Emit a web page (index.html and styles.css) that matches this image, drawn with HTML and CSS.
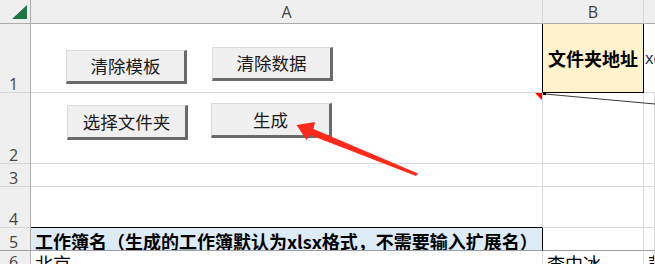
FILE: index.html
```html
<!DOCTYPE html>
<html lang="zh-CN">
<head>
    <meta charset="UTF-8">
    <title>工作簿生成</title>
    <link rel="stylesheet" href="styles.css">
</head>
<body>
    <div class="sheet">
        <!-- headers -->
        <div class="corner">
            <svg width="30" height="23" viewBox="0 0 30 23"><polygon points="12,19 27,19 27,5" fill="#217346"/></svg>
        </div>
        <div class="colhead">A</div>
        <div class="colhead">B</div>
        <div class="colhead last"></div>

        <!-- row 1 -->
        <div class="rowhead">1</div>
        <div class="cell a1"></div>
        <div class="cell b1">文件夹地址</div>
        <div class="cell c1">xc</div>

        <!-- row 2 -->
        <div class="rowhead">2</div>
        <div class="cell"></div>
        <div class="cell"></div>
        <div class="cell"></div>

        <!-- row 3 -->
        <div class="rowhead">3</div>
        <div class="cell"></div>
        <div class="cell"></div>
        <div class="cell"></div>

        <!-- row 4 -->
        <div class="rowhead">4</div>
        <div class="cell a4"></div>
        <div class="cell"></div>
        <div class="cell"></div>

        <!-- row 5 (frozen) -->
        <div class="rowhead frozen">5</div>
        <div class="cell frozen a5">工作簿名（生成的工作簿默认为xlsx格式，不需要输入扩展名）</div>
        <div class="cell frozen"></div>
        <div class="cell frozen"></div>

        <!-- row 6 -->
        <div class="rowhead top">6</div>
        <div class="cell top">北京</div>
        <div class="cell top">李中冰</div>
        <div class="cell top">彭</div>

        <!-- form buttons -->
        <button class="xl-btn btn-clear-tpl">清除模板</button>
        <button class="xl-btn btn-clear-data">清除数据</button>
        <button class="xl-btn btn-folder">选择文件夹</button>
        <button class="xl-btn btn-make">生成</button>

        <!-- comment marker, comment leader line and red arrow -->
        <svg class="overlay" width="655" height="264" viewBox="0 0 655 264">
            <polygon points="535,93 542,93 542,100" fill="#ff0000"/>
            <line x1="545" y1="94" x2="655" y2="104" stroke="#3a3a3a" stroke-width="1"/>
            <rect x="543" y="92" width="3" height="3" fill="#000"/>
            <polygon points="296.5,125 315,122 313.5,129 418,173.5 416,176 310,135 306.5,140" fill="#fd2a1c"/>
        </svg>
    </div>
</body>
</html>
```

FILE: styles.css
```css
html, body {
    margin: 0;
    padding: 0;
    background-color: #fff;
    overflow: hidden;
}
.sheet {
    position: relative;
    width: 655px;
    height: 264px;
    display: grid;
    grid-template-columns: 31px 512px 101px 1fr;
    grid-template-rows: 24px 69px 71px 23px 41px 23px 1fr;
    font-family: "Noto Sans CJK SC", "Noto Sans", sans-serif;
    overflow: hidden;
}
.corner {
    background-color: #efefef;
    border-right: 1px solid #ababab;
    border-bottom: 1px solid #ababab;
    box-sizing: border-box;
}
.corner svg {
    display: block;
}
.colhead {
    background-color: #efefef;
    border-right: 1px solid #d4d4d4;
    border-bottom: 1px solid #ababab;
    box-sizing: border-box;
    color: #444;
    font-family: "Open Sans", "Noto Sans", sans-serif;
    font-size: 16px;
    line-height: 1;
    display: flex;
    align-items: center;
    justify-content: center;
    padding-top: 1px;
}
.colhead.last {
    border-right: none;
}
.rowhead {
    background-color: #efefef;
    border-right: 1px solid #ababab;
    border-bottom: 1px solid #d4d4d4;
    box-sizing: border-box;
    color: #444;
    font-family: "Open Sans", "Noto Sans", sans-serif;
    font-size: 16px;
    line-height: 1;
    display: flex;
    align-items: flex-end;
    justify-content: center;
    padding-right: 3px;
}
.rowhead.top {
    align-items: flex-start;
    padding-top: 3px;
}
.cell {
    border-right: 1px solid #dadada;
    border-bottom: 1px solid #dadada;
    box-sizing: border-box;
    font-size: 18px;
    line-height: 1;
    color: #000;
    white-space: nowrap;
    overflow: hidden;
    display: flex;
    align-items: center;
    padding-left: 4px;
}
.cell.top {
    align-items: flex-start;
    padding-top: 3px;
}
.frozen {
    border-bottom: 1px solid #9e9e9e;
}
.a1 {
    border-right-color: #000;
}
.b1 {
    background-color: #fff2cc;
    border-right-color: #000;
    border-bottom-color: #000;
    font-weight: bold;
    justify-content: center;
    padding-left: 0;
}
.c1 {
    color: #1f3357;
    font-family: "Liberation Sans", sans-serif;
    font-size: 17px;
    padding-left: 1px;
    border-right: none;
}
.a4 {
    border-bottom-color: #000;
}
.a5 {
    background-color: #ddebf7;
    border-right-color: #000;
    font-weight: bold;
    padding-top: 3px;
}

/* Excel form-control buttons */
.xl-btn {
    position: absolute;
    box-sizing: border-box;
    margin: 0;
    padding: 0;
    background-color: #f0f0f0;
    border-top: 1px solid #dcdcdc;
    border-left: 1px solid #dcdcdc;
    border-right: 3px solid #6a6a6a;
    border-bottom: 3px solid #6a6a6a;
    border-radius: 0;
    color: #1a1a1a;
    font-family: "Noto Sans CJK SC", sans-serif;
    font-size: 17.5px;
    line-height: 1;
    text-align: center;
}
.btn-clear-tpl {
    left: 66px;
    top: 50px;
    width: 121px;
    height: 34px;
}
.btn-clear-data {
    left: 212px;
    top: 47px;
    width: 121px;
    height: 34px;
}
.btn-folder {
    left: 67px;
    top: 105px;
    width: 121px;
    height: 35px;
}
.btn-make {
    left: 211px;
    top: 103px;
    width: 121px;
    height: 35px;
}
.overlay {
    position: absolute;
    left: 0;
    top: 0;
    pointer-events: none;
}
```
